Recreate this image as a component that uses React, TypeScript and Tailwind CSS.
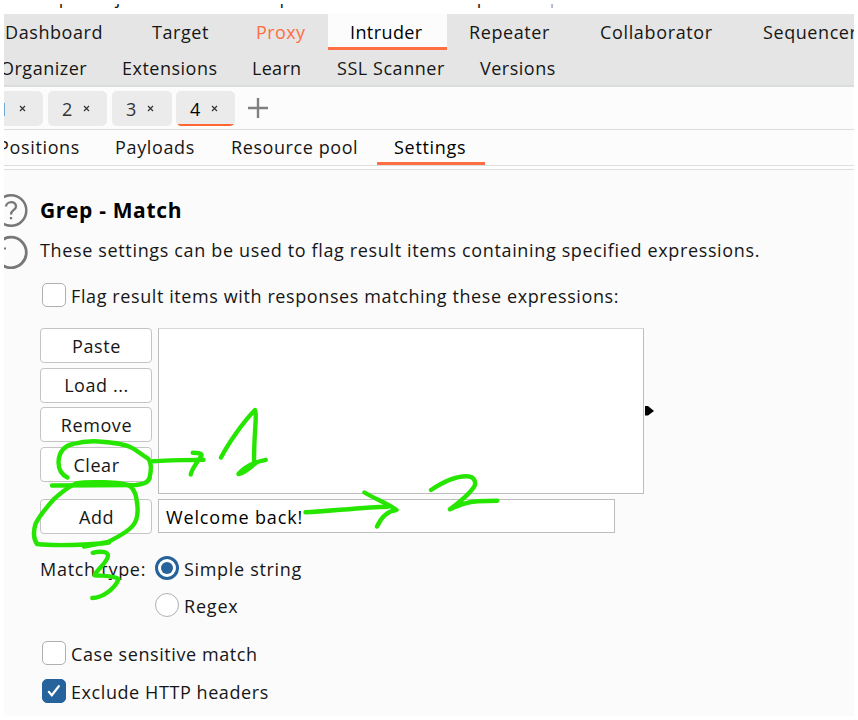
import type { ReactNode } from 'react'

const menu = [
  { label: 'Burp', cls: 'w-[58px]' },
  { label: 'Project', cls: 'w-[82px]' },
  { label: 'Intruder', cls: 'w-[90px]' },
  { label: 'Repeater', cls: 'w-[102px]' },
  { label: 'Window', cls: 'w-[88px]' },
  { label: 'Help', cls: 'w-[71px]' },
]

function Cell({ className, children }: { className: string; children: ReactNode }) {
  return <div className={`flex shrink-0 items-center whitespace-nowrap ${className}`}>{children}</div>
}

function Chip({ label, active, className = '' }: { label: string; active?: boolean; className?: string }) {
  return (
    <div
      className={`relative flex h-[35px] shrink-0 items-center overflow-hidden rounded-[5px] bg-[#ebebeb] pl-[14px] ${className}`}
    >
      <span className={`mt-[2px] w-[17px] ${active ? 'text-black' : 'text-[#333]'}`}>{label}</span>
      <svg width="7" height="7" viewBox="0 0 7 7" className="mt-[1px] ml-[4px]" stroke="#333" strokeWidth="1.2" fill="none">
        <path d="M1 1l5 5M6 1L1 6" />
      </svg>
      {active && <span className="absolute right-[1px] bottom-0 left-[2px] h-[2px] bg-[#ff6633]" />}
    </div>
  )
}

function Button({ children, className = '' }: { children: ReactNode; className?: string }) {
  return (
    <button
      className={`flex h-[35px] w-[112px] shrink-0 items-center justify-center rounded-[4px] border border-[#c4c4c4] bg-white pl-[1px] ${className}`}
    >
      {children}
    </button>
  )
}

function Check({ checked }: { checked?: boolean }) {
  return (
    <span
      className={`flex h-[24px] w-[24px] shrink-0 items-center justify-center rounded-[5px] border ${
        checked ? 'border-[#26629c] bg-[#26629c]' : 'border-[#b0b0b0] bg-white'
      }`}
    >
      {checked && (
        <svg width="22" height="22" viewBox="0 0 22 22" fill="none" stroke="#fff" strokeWidth="2.2" strokeLinecap="round">
          <path d="M5.8 11.8l3 3.4 7-9" />
        </svg>
      )}
    </span>
  )
}

function Radio({ checked }: { checked?: boolean }) {
  return (
    <span
      className={`flex h-[24px] w-[24px] shrink-0 items-center justify-center rounded-full bg-white ${
        checked ? 'border-3 border-[#26629c]' : 'border border-[#b0b0b0]'
      }`}
    >
      {checked && <span className="h-[12px] w-[12px] rounded-full bg-[#26629c]" />}
    </span>
  )
}

function Annotations() {
  return (
    <svg
      className="pointer-events-none absolute top-0 left-0"
      width="858"
      height="720"
      viewBox="0 0 858 720"
      fill="none"
      stroke="#26e600"
      strokeWidth="4.4"
      strokeLinecap="round"
      strokeLinejoin="round"
    >
      <path d="M67.5 477.5C60 474 58.5 468 58.5 462C59 452 64 446 73 444C84 441 96 441 104 442C115 443 127 444 134 449L148.500 459C152 464 151 472 149.500 478C148 483 143 484 136 485L52 485.500" />
      <path d="M84 546.500L108 542C115 538 127 533 132.500 526C137 521 138 514 137.500 507C136.500 498 136 490 129 485.500C122 482 87 481 76 483.500C67 487 60 494 54 499C46 508 39 516 35.500 524C33 532 33 538 37 544C53 546 92 545 109 542.500" />
      <path d="M153 461.300C168 460 186 460 203.500 459.800M192.700 452.700C198 452.700 202 453.500 201.500 455.500C199 460 192 468 190.700 474.500" />
      <path d="M221 457.500C227 446 242 423 255 410C257.500 414 254 428 254 463M265.700 459.800C255 462 245 466 238.500 474C247 472 250 467 256 463" />
      <path d="M241 471.500L250 467" />
      <path d="M305.500 512.300C330 511 367 507 388 506.700M364.500 492.500C375 499 387 503 396.500 510C386 511 380 520 377 526.500" />
      <path d="M431 490C443 482 456 476 467 476.300C475 476.500 476.500 483 474 487C468 496 457 504 450 509.300C459 505 468 501.500 478 501.300L497.300 500.700" />
      <path d="M92.700 552.800C100 551 107 551.500 108 555C108.500 562 97 569 94.500 575.300C101 576 113 575 118.500 579C115 589 102 598 92.300 598" />
    </svg>
  )
}

export default function App() {
  return (
    <div className="relative h-[720px] w-[858px] overflow-hidden bg-white font-['Open_Sans',sans-serif] text-[18px] leading-[26px] tracking-[0.58px] text-[#161616]">
      <div className="flex h-[716px] w-[854px] flex-col overflow-hidden pt-[4px] pl-[4px]">
        <div className="h-[10px] shrink-0 bg-white">
          <div className="h-[4px] overflow-hidden">
            <div className="-mt-[20px] flex pl-[23px] whitespace-nowrap">
              {menu.map((m) => (
                <span key={m.label} className={`shrink-0 ${m.cls}`}>
                  {m.label}
                </span>
              ))}
              <span className="text-[#aaa]">Burp Suite Professional v2023.10.3.5 - Temporary</span>
            </div>
          </div>
        </div>

        <div className="flex h-[73px] w-[850px] shrink-0 flex-col overflow-hidden border-b-2 border-[#dadddd] bg-[#e5e5e5]">
          <div className="flex h-[36px] shrink-0">
            <Cell className="w-[147px] pl-[1px]">Dashboard</Cell>
            <Cell className="w-[104px] pl-[1px]">Target</Cell>
            <Cell className="w-[73px] pl-[1px] tracking-[0.400px] text-[#ff6f43]">Proxy</Cell>
            <Cell className="w-[119px] border-b-3 border-[#ff6f43] bg-[#fcfcfc] pt-[3px] pl-[22px] tracking-[0.400px] text-black">
              Intruder
            </Cell>
            <Cell className="w-[153px] pl-[22px]">Repeater</Cell>
            <Cell className="w-[162px] tracking-[0.650px]">Collaborator</Cell>
            <Cell className="w-[96px] pl-[1px]">Sequencer</Cell>
          </div>
          <div className="-ml-[4px] flex h-[36px] shrink-0 tracking-[0.500px]">
            <Cell className="w-[122px]">Organizer</Cell>
            <Cell className="w-[130px]">Extensions</Cell>
            <Cell className="w-[85px] tracking-[0.300px]">Learn</Cell>
            <Cell className="w-[143px] tracking-[0.550px]">SSL Scanner</Cell>
            <Cell className="w-[100px]">Versions</Cell>
          </div>
        </div>

        <div className="flex h-[43px] w-[850px] shrink-0 items-center border-b border-[#dcdcdc] bg-[#fcfcfc]">
          <div className="flex h-[35px] w-[39px] shrink-0 justify-end overflow-hidden rounded-r-[5px]">
            <Chip label="1" className="w-[59px]" />
          </div>
          <Chip label="2" className="ml-[5px] w-[59px]" />
          <Chip label="3" className="ml-[5px] w-[60px]" />
          <Chip label="4" active className="ml-[4px] w-[59px]" />
          <svg width="20" height="20" viewBox="0 0 20 20" className="ml-[13px]" stroke="#808080" strokeWidth="2.400">
            <path d="M10 0v20M0 10h20" />
          </svg>
        </div>

        <div className="flex h-[36px] w-[850px] shrink-0 overflow-hidden border-b border-[#dedede] bg-[#fcfcfc]">
          <Cell className="-ml-[6px] w-[117px] pb-[2px] tracking-[0.650px]">Positions</Cell>
          <Cell className="w-[115px] pb-[2px] tracking-[0.650px]">Payloads</Cell>
          <Cell className="w-[147px] pb-[2px] pl-[1px]">Resource pool</Cell>
          <Cell className="w-[108px] border-b-3 border-[#ff6f43] pt-[1px] pl-[17px] tracking-[0.700px] text-black">Settings</Cell>
        </div>
        <div className="h-[4px] w-[850px] shrink-0 border-b border-[#dedede] bg-[#fdfdfd]" />

        <div className="flex w-[850px] grow flex-col bg-[#fbfbfb]">
          <div className="mt-[22px] flex h-[35px] items-center">
            <svg width="24" height="34" viewBox="4 193 24 34" fill="none" stroke="#777" className="shrink-0">
              <circle cx="11" cy="210.500" r="15.300" strokeWidth="2.500" />
              <path
                d="M6 206.500C6.500 201 16 200.500 16 206.500C16 210 11 210 11 214.500M11 217V219.200"
                strokeWidth="2.300"
              />
            </svg>
            <h2 className="ml-[12px] text-[21px] font-bold tracking-[0.650px] text-black">Grep - Match</h2>
          </div>
          <div className="mt-[7px] flex h-[36px] items-center">
            <svg width="24" height="34" viewBox="4 235 24 34" fill="none" stroke="#777" className="shrink-0">
              <circle cx="11" cy="252.500" r="15.300" strokeWidth="2.800" />
              <path d="M4 248.500h2" strokeWidth="2" />
            </svg>
            <p className="ml-[12px] pb-[5px] tracking-[0.65px] whitespace-nowrap">
              These settings can be used to flag result items containing specified expressions.
            </p>
          </div>
          <label className="mt-[13px] ml-[38px] flex h-[24px] items-center">
            <Check />
            <span className="mt-[1px] ml-[5px] tracking-[0.600px]">Flag result items with responses matching these expressions:</span>
          </label>

          <div className="mt-[21px] ml-[36px] flex gap-[6px]">
            <div className="flex flex-col gap-[4.700px]">
              <Button>Paste</Button>
              <Button>Load ...</Button>
              <Button>Remove</Button>
              <Button>Clear</Button>
            </div>
            <div className="h-[166px] w-[486px] border border-[#bdbdbd] border-t-[#d8d8d8] bg-white" />
            <svg width="9" height="10" viewBox="0 0 9 10" className="mt-[78px] -ml-[5px]">
              <path d="M0 0H3L9 5L3 9.500H0Z" fill="#000" />
            </svg>
          </div>
          <div className="mt-[5px] ml-[36px] flex gap-[6px]">
            <Button>Add</Button>
            <div className="flex h-[34px] w-[457px] items-center border border-[#bdbdbd] bg-white pt-[1px] pl-[7px] tracking-[0.85px] text-black">
              Welcome back!
            </div>
          </div>

          <div className="mt-[22px] ml-[36px] flex h-[24px] items-center">
            <span className="mt-[1px] w-[115px] tracking-[0.720px]">Match type:</span>
            <Radio checked />
            <span className="mt-[1px] ml-[5px] tracking-[0.680px]">Simple string</span>
          </div>
          <div className="mt-[13px] ml-[151px] flex h-[24px] items-center">
            <Radio />
            <span className="mt-[2px] ml-[5px] tracking-[0.800px]">Regex</span>
          </div>
          <div className="mt-[24px] ml-[38px] flex h-[24px] items-center">
            <Check />
            <span className="mt-[2px] ml-[5px]">Case sensitive match</span>
          </div>
          <div className="mt-[14px] ml-[38px] flex h-[24px] items-center">
            <Check checked />
            <span className="mt-[2px] ml-[5px]">Exclude HTTP headers</span>
          </div>
        </div>
      </div>
      <Annotations />
    </div>
  )
}
